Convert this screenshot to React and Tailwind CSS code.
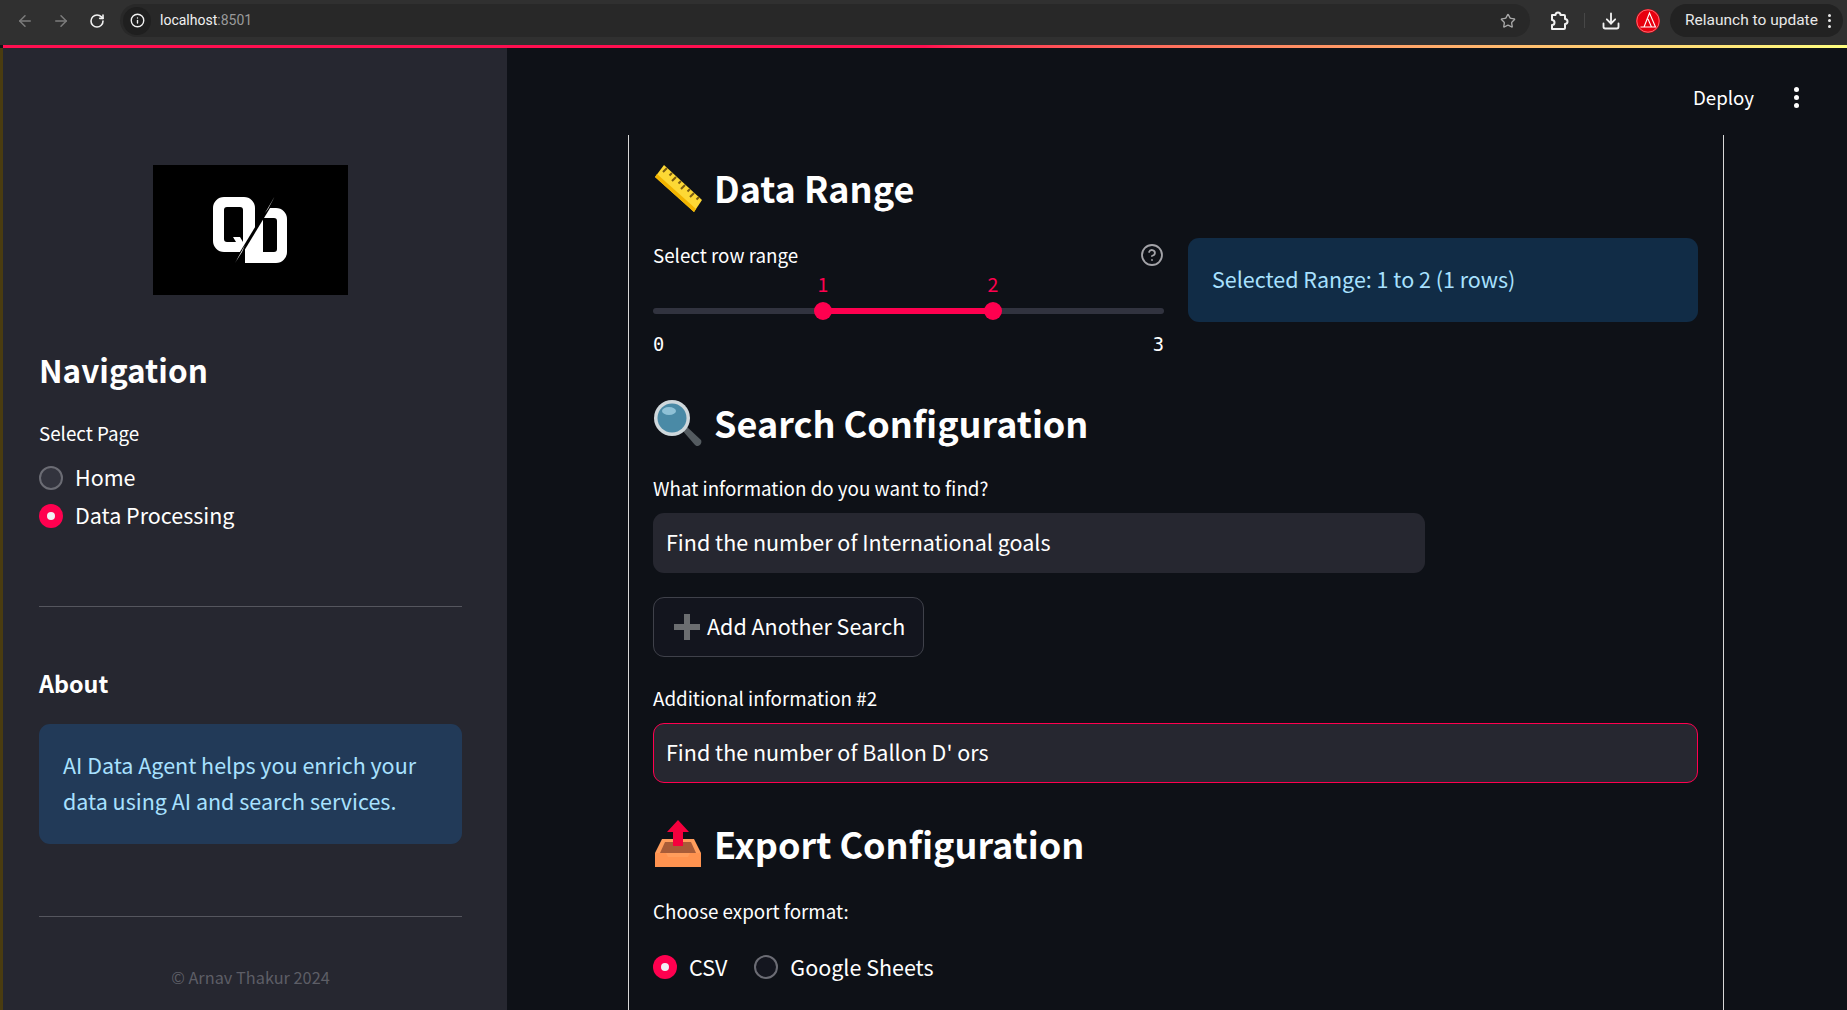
import { ArrowLeft, ArrowRight, RotateCw, Info, Star, Download, CircleHelp } from "lucide-react";

const sans = "[font-family:'Noto_Sans_CJK_SC','Noto_Sans',sans-serif]";

function PuzzleIcon() {
  return (
    <svg width="22" height="22" viewBox="0 0 22 22" fill="none" stroke="#f1f1f1" strokeWidth="2" strokeLinejoin="round">
      <path d="M5 5h3.500a2.500 2.500 0 0 1 5 0H17a1 1 0 0 1 1 1v3a2.500 2.500 0 0 1 0 5v4a1 1 0 0 1-1 1H5v-4a2.500 2.500 0 0 0 0-5z" />
    </svg>
  );
}

function ProfileBadge() {
  return (
    <svg width="24" height="24" viewBox="0 0 24 24" fill="none" className="block">
      <circle cx="12" cy="12" r="12" fill="#e8000f" />
      <path d="M4.500 18h15L13.500 4 8 18M12 10l3.500 8" stroke="#fff" strokeWidth="1.100" />
      <circle cx="12" cy="12" r="11.200" stroke="#ffd0d0" strokeWidth="0.500" />
    </svg>
  );
}

function Logo() {
  return (
    <svg width="195" height="130" viewBox="0 0 195 130" className="block">
      <defs>
        <clipPath id="left-of-slash">
          <polygon points="50,20 129,20 75,110 50,110" />
        </clipPath>
        <clipPath id="right-of-slash">
          <polygon points="129,20 150,20 150,110 75,110" />
        </clipPath>
      </defs>
      <rect width="195" height="130" fill="#000" />
      <path
        clipPath="url(#left-of-slash)"
        fill="#fff"
        fillRule="evenodd"
        d="M71 32h20a11 11 0 0 1 11 11v33a11 11 0 0 1-11 11H71a11 11 0 0 1-11-11V43a11 11 0 0 1 11-11zM74 42a3 3 0 0 0-3 3v29a3 3 0 0 0 3 3h9l-3-5h7l3 5V45a3 3 0 0 0-3-3z"
      />
      <path
        clipPath="url(#right-of-slash)"
        fill="#fff"
        fillRule="evenodd"
        d="M92 43h31a11 11 0 0 1 11 11v33a11 11 0 0 1-11 11H92zM110 53v34h11a3 3 0 0 0 3-3V56a3 3 0 0 0-3-3z"
      />
      <path d="M122 32 82 98" stroke="#000" strokeWidth="3" />
      <polygon points="122,31 112,48 115,44" fill="#fff" />
      <polygon points="82,98 92,80 89,87" fill="#fff" />
    </svg>
  );
}

function RulerEmoji() {
  return (
    <svg width="50" height="50" viewBox="0 0 50 50" className="shrink-0">
      <polygon points="2,15 11,3 49,38 41,50" fill="#fdd835" />
      <polygon points="2,15 41,50 43,47 4,12" fill="#f2b400" />
      <path d="M14 6l-4 4M19 11l-2.500 2.500M23 15l-4 4M28 19l-2.500 2.500M32 23l-4 4M37 27l-2.500 2.500M41 31l-4 4M46 35l-2.500 2.500" stroke="#7a5b12" strokeWidth="2" />
    </svg>
  );
}

function SearchEmoji() {
  return (
    <svg width="50" height="50" viewBox="0 0 50 50" className="mt-[3px] shrink-0">
      <path d="M29 31l4-4 15 14c1 2 0 5-3 6-1 0-2 0-3-1z" fill="#545b60" />
      <circle cx="19" cy="19" r="18" fill="#cfd8dc" />
      <circle cx="19" cy="19" r="14.500" fill="#4a8aa6" />
      <ellipse cx="16" cy="12" rx="7" ry="4" fill="#8fc1d6" />
    </svg>
  );
}

function OutboxEmoji() {
  return (
    <svg width="50" height="50" viewBox="0 0 50 50" className="mt-[2px] shrink-0">
      <polygon points="9,20 41,20 48,34 48,48 2,48 2,34" fill="#ff9d5c" />
      <polygon points="12,23 38,23 43,34 7,34" fill="#a85c38" />
      <path d="M2 34h11l2 4h20l2-4h11v14H2z" fill="#ff9350" />
      <polygon points="25,1 36,13 30,13 30,27 20,27 20,13 14,13" fill="#f5003d" />
    </svg>
  );
}

function PlusEmoji() {
  return (
    <svg width="28" height="28" viewBox="0 0 28 28" className="shrink-0">
      <path d="M11 1h6v10h10v6H17v10h-6V17H1v-6h10z" fill="#6b6d70" />
    </svg>
  );
}

function Radio({ on, sidebar }) {
  if (on) {
    return (
      <span className="flex h-6 w-6 shrink-0 items-center justify-center rounded-full bg-[#ff004f]">
        <span className="h-2 w-2 rounded-full bg-[#f0f0f5]" />
      </span>
    );
  }
  return (
    <span
      className={
        "h-6 w-6 shrink-0 rounded-full border-2 border-[#6b6c74] " +
        (sidebar ? "bg-[#33343e]" : "bg-[#14161f]")
      }
    />
  );
}

function Heading({ icon, children, className = "" }) {
  return (
    <div className={"flex h-[50px] items-center " + className}>
      {icon}
      <h2 className="ml-[11px] text-[36px] leading-[50px] font-semibold text-white">{children}</h2>
    </div>
  );
}

function Thumb({ value, className }) {
  return (
    <div className={"absolute top-[-6px] h-[18px] w-[18px] rounded-full bg-[#ff004f] " + className}>
      <span className="absolute top-[-30px] left-1/2 -translate-x-1/2 text-[19.500px] leading-[24px] text-[#ff004f]">{value}</span>
    </div>
  );
}

function Browser() {
  return (
    <div>
      <div className="flex h-[45px] items-center bg-[#303030] pr-[4px] pb-[4px] pl-[16px]">
        <ArrowLeft size={18} className="text-[#7c7c7c]" />
        <ArrowRight size={18} className="ml-[18px] text-[#7c7c7c]" />
        <RotateCw size={16} className="ml-[19px] text-[#f1f1f1]" strokeWidth={2.400} />
        <div className="ml-[15px] flex h-[33px] w-[1410px] items-center rounded-full bg-[#282828] pl-[3px]">
          <span className="flex h-[28px] w-[28px] items-center justify-center rounded-full bg-[#1f1f1f]">
            <Info size={15} className="text-[#f1f1f1]" strokeWidth={2.200} />
          </span>
          <span className="ml-[9px] font-['Roboto',sans-serif] text-[14px] text-[#f1f1f1]">
            localhost<span className="text-[#9a9a9a]">:8501</span>
          </span>
          <Star size={16} className="mr-[14px] ml-auto text-[#a8a8a8]" strokeWidth={2} />
        </div>
        <span className="ml-[17px]"><PuzzleIcon /></span>
        <span className="ml-[15px] h-[15px] w-px bg-[#474747]" />
        <Download size={20} className="ml-[16px] text-[#f1f1f1]" strokeWidth={2.200} />
        <span className="ml-[15px]"><ProfileBadge /></span>
        <div className="ml-[10px] flex h-[33px] flex-1 items-center rounded-full bg-[#222222] pl-[15px] font-['Roboto',sans-serif] text-[15.500px] text-[#e8e8e8]">
          Relaunch to update
          <span className="ml-[10px] flex flex-col gap-[2.500px]">
            <span className="h-[3px] w-[3px] rounded-full bg-[#e8e8e8]" />
            <span className="h-[3px] w-[3px] rounded-full bg-[#e8e8e8]" />
            <span className="h-[3px] w-[3px] rounded-full bg-[#e8e8e8]" />
          </span>
        </div>
      </div>
      <div className="ml-[3px] h-[3px] bg-gradient-to-r from-[#ff0f50] via-[#ff0f50] to-[#ffff80]" />
    </div>
  );
}

function Sidebar() {
  return (
    <aside className="h-full w-[504px] shrink-0 bg-[#262730] pr-[45px] pl-[36px]">
      <div className="mx-auto mt-[117px] w-[195px]"><Logo /></div>
      <h2 className="mt-[49px] text-[31.500px] leading-[50px] font-semibold text-white">Navigation</h2>
      <div className="mt-[26px] text-[18.800px] leading-[26px] text-white">Select Page</div>
      <div className="mt-[20px] flex flex-col gap-[14px] text-[21.500px] leading-[24px] text-white">
        <label className="flex items-center gap-[12px]"><Radio sidebar /><span className="mt-[-2px]">Home</span></label>
        <label className="flex items-center gap-[12px]"><Radio on /><span className="mt-[-2px]">Data Processing</span></label>
      </div>
      <hr className="mt-[78px] border-[#55565e]" />
      <h3 className="mt-[59px] text-[23.333px] leading-[34px] font-semibold text-white">About</h3>
      <div className="mt-[24px] rounded-[11px] bg-[#223a58] px-[24px] pt-[23px] pb-[25px] text-[21.500px] leading-[36px] text-[#a8e1ff]">
        AI Data Agent helps you enrich your data using AI and search services.
      </div>
      <hr className="mt-[72px] border-[#55565e]" />
      <p className="mt-[48px] text-center text-[16.333px] leading-[24px] text-[#5d5e66]">© Arnav Thakur 2024</p>
    </aside>
  );
}

function Main() {
  return (
    <main className="h-full min-w-0 flex-1 bg-[#0e1117]">
      <div className="flex h-[87px] items-start pt-[34px] text-white">
        <span className="ml-[1186px] text-[18.667px] leading-[30px]">Deploy</span>
        <span className="ml-[40px] flex flex-col gap-[3px] pt-[5px]">
          <span className="h-[5px] w-[5px] rounded-full bg-white" />
          <span className="h-[5px] w-[5px] rounded-full bg-white" />
          <span className="h-[5px] w-[5px] rounded-full bg-white" />
        </span>
      </div>
      <div className="ml-[121px] h-full w-[1096px] border-x border-[#d8d8d8] pt-[27px] pr-[25px] pl-[24px]">
        <Heading icon={<RulerEmoji />}>Data Range</Heading>
        <div className="flex gap-[24px]">
          <div className="w-[511px] shrink-0">
            <div className="mt-[30px] flex h-[26px] items-center justify-between text-white">
              <span className="text-[18.800px]">Select row range</span>
              <CircleHelp size={24} className="text-[#a3a3a8]" strokeWidth={1.800} />
            </div>
            <div className="relative mt-[40px] h-[6px] rounded-full bg-[#31333f]">
              <div className="absolute left-[170px] h-full w-[170px] bg-[#ff004f]" />
              <Thumb value="1" className="left-[161px]" />
              <Thumb value="2" className="left-[331px]" />
            </div>
            <div className="mt-[19px] flex justify-between font-['DejaVu_Sans_Mono',monospace] text-[18.667px] leading-[24px] text-white">
              <span>0</span>
              <span>3</span>
            </div>
          </div>
          <div className="mt-[26px] flex h-[84px] w-[510px] items-center rounded-[11px] bg-[#112c46] px-[24px] pb-[2px] text-[21.500px] text-[#a8e1ff]">
            Selected Range: 1 to 2 (1 rows)
          </div>
        </div>
        <Heading icon={<SearchEmoji />} className="mt-[40px]">Search Configuration</Heading>
        <label className="mt-[28px] block text-[18.800px] leading-[26px] text-white">What information do you want to find?</label>
        <div className="mt-[12px] flex h-[60px] w-[772px] items-center rounded-[11px] bg-[#262730] px-[13px] pb-[2px] text-[21.500px] text-white">
          Find the number of International goals
        </div>
        <button className="mt-[24px] flex h-[60px] items-center gap-[6px] rounded-[11px] border border-[#3f414a] bg-[#13151e] pr-[18px] pb-[1px] pl-[19px] text-[21.500px] text-white">
          <PlusEmoji />
          Add Another Search
        </button>
        <label className="mt-[28px] block text-[18.800px] leading-[26px] text-white">Additional information #2</label>
        <div className="mt-[12px] flex h-[60px] w-full items-center rounded-[11px] border border-[#ff004f] bg-[#262730] px-[12px] pb-[2px] text-[21.500px] text-white">
          Find the number of Ballon D' ors
        </div>
        <Heading icon={<OutboxEmoji />} className="mt-[35px]">Export Configuration</Heading>
        <label className="mt-[30px] block text-[18.800px] leading-[26px] text-white">Choose export format:</label>
        <div className="mt-[28px] flex items-center text-[21.500px] leading-[30px] text-white">
          <Radio on />
          <span className="ml-[12px]">CSV</span>
          <span className="ml-[27px] flex"><Radio /></span>
          <span className="ml-[12px]">Google Sheets</span>
        </div>
      </div>
    </main>
  );
}

export default function App() {
  return (
    <div className={"flex h-[1010px] w-[1847px] flex-col overflow-hidden bg-[#0e1117] " + sans}>
      <Browser />
      <div className="flex min-h-0 flex-1 border-l-[3px] border-[#4a3c10]">
        <Sidebar />
        <Main />
      </div>
    </div>
  );
}
